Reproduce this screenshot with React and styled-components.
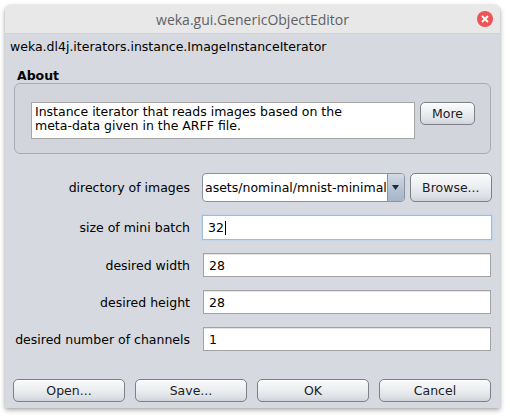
import { createGlobalStyle } from 'styled-components'
import styled from 'styled-components'

const GlobalStyle = createGlobalStyle`
  html, body {
    margin: 0;
    padding: 0;
    background: #ffffff;
  }
  body {
    font-family: 'DejaVu Sans', sans-serif;
    font-size: 12.5px;
    color: #000;
  }
`

const Page = styled.div`
  padding: 5px 10px 10px 5px;
`

const Window = styled.div`
  width: 495px;
  height: 403px;
  display: flex;
  flex-direction: column;
  border-radius: 6px 6px 0 0;
  box-shadow: 0 2px 5px rgba(0, 0, 0, 0.35), 0 0 1px rgba(0, 0, 0, 0.3);
  overflow: hidden;
`

const TitleBar = styled.div`
  height: 28px;
  flex: none;
  background: #e8e8e8;
  border-bottom: 1px solid #d0d0d0;
  display: flex;
  align-items: center;
  justify-content: center;
  position: relative;
  font-family: 'Open Sans', 'DejaVu Sans', sans-serif;
  font-size: 14px;
  color: #5e6165;
`

const CloseBtn = styled.div`
  position: absolute;
  right: 7px;
  top: 6px;
  width: 16px;
  height: 16px;
  border-radius: 50%;
  background: #ef5354;
  display: flex;
  align-items: center;
  justify-content: center;
`

const Body = styled.div`
  flex: 1;
  background: #d6d9df;
  display: flex;
  flex-direction: column;
`

const ClassName = styled.div`
  padding: 4px 5px 0;
  height: 17px;
  line-height: 17px;
`

const AboutLabel = styled.div`
  margin: 14px 0 0 12px;
  font-weight: bold;
  line-height: 14px;
`

const AboutBox = styled.div`
  margin: 0 9px 0 9px;
  height: 71px;
  box-sizing: border-box;
  border: 1px solid #a9adb3;
  border-radius: 6px;
  background: #d2d5db;
  padding: 18px 15px 0 16px;
  display: flex;
  gap: 5px;
  align-items: flex-start;
`

const AboutText = styled.div`
  width: 384px;
  height: 37px;
  box-sizing: border-box;
  background: #fff;
  border: 1px solid #a6a6a6;
  padding: 2px 3px;
  line-height: 14px;
`

const Button = styled.button`
  height: ${({ h }) => h || 23}px;
  width: ${({ w }) => (w ? `${w}px` : 'auto')};
  box-sizing: border-box;
  font-family: 'DejaVu Sans', sans-serif;
  font-size: 12.5px;
  color: #1c1c24;
  border: 1px solid #7c8088;
  border-radius: 5px;
  background: linear-gradient(#fbfbfc 0%, #eceef1 45%, #dee1e6 80%, #cfd2d8 100%);
  box-shadow: inset 0 1px 0 #ffffff;
  padding: 0;
`

const Form = styled.div`
  margin-top: 19px;
  padding: 0 10px 0 10px;
  display: grid;
  grid-template-columns: 175px 1fr;
  column-gap: 12px;
  row-gap: 13px;
  align-items: center;
`

const Label = styled.div`
  text-align: right;
  white-space: nowrap;
`

const Field = styled.div`
  height: ${({ h }) => h || 24}px;
  box-sizing: border-box;
  background: #fff;
  border: 1px solid ${({ focus }) => (focus ? '#9fbcd8' : '#a3a3a3')};
  box-shadow: ${({ focus }) => (focus ? '0 0 0 1px #c3d6ea' : 'inset 0 1px 0 #e4e4e4')};
  padding: 0 5px;
  display: flex;
  align-items: center;
  margin-left: ${({ focus }) => (focus ? '0' : '1px')};
  margin-right: ${({ focus }) => (focus ? '0' : '1px')};
`

const Caret = styled.span`
  display: inline-block;
  width: 1px;
  height: 14px;
  background: #000;
  margin-left: 1px;
`

const ComboRow = styled.div`
  display: flex;
  gap: 5px;
  align-items: stretch;
  height: 29px;
`

const Combo = styled.div`
  flex: 1;
  display: flex;
  box-sizing: border-box;
  border: 1px solid #8a939e;
  border-radius: 4px;
  overflow: hidden;
  background: #fff;
`

const ComboText = styled.div`
  flex: 1;
  overflow: hidden;
  white-space: nowrap;
  display: flex;
  align-items: center;
  padding-left: 2px;
`

const ComboArrow = styled.div`
  width: 16px;
  border-left: 1px solid #8a939e;
  background: linear-gradient(#d2dbe6, #b4c1d1 60%, #a7b5c7);
  display: flex;
  align-items: center;
  justify-content: center;
`

const Footer = styled.div`
  margin-top: auto;
  padding: 0 9px 6px 8px;
  display: grid;
  grid-template-columns: repeat(4, 1fr);
  column-gap: 10px;
`

const rows = [
  { label: 'size of mini batch', value: '32', focus: true, h: 25 },
  { label: 'desired width', value: '28' },
  { label: 'desired height', value: '28' },
  { label: 'desired number of channels', value: '1' },
]

export default function App() {
  return (
    <Page>
      <GlobalStyle />
      <Window>
        <TitleBar>
          weka.gui.GenericObjectEditor
          <CloseBtn>
            <svg width="8" height="8" viewBox="0 0 8 8">
              <path d="M1 1L7 7M7 1L1 7" stroke="#fff" strokeWidth="2" />
            </svg>
          </CloseBtn>
        </TitleBar>
        <Body>
          <ClassName>weka.dl4j.iterators.instance.ImageInstanceIterator</ClassName>
          <AboutLabel>About</AboutLabel>
          <AboutBox>
            <AboutText>
              Instance iterator that reads images based on the
              <br />
              meta-data given in the ARFF file.
            </AboutText>
            <Button w={55} h={23}>More</Button>
          </AboutBox>
          <Form>
            <Label>directory of images</Label>
            <ComboRow>
              <Combo>
                <ComboText>asets/nominal/mnist-minimal</ComboText>
                <ComboArrow>
                  <svg width="7" height="5" viewBox="0 0 7 5">
                    <path d="M0 0H7L3.5 5Z" fill="#1f2a38" />
                  </svg>
                </ComboArrow>
              </Combo>
              <Button w={82} h={29}>Browse...</Button>
            </ComboRow>
            {rows.map((r) => (
              <>
                <Label key={r.label + 'l'}>{r.label}</Label>
                <Field key={r.label + 'f'} focus={r.focus} h={r.h}>
                  {r.value}
                  {r.focus && <Caret />}
                </Field>
              </>
            ))}
          </Form>
          <Footer>
            <Button>Open...</Button>
            <Button>Save...</Button>
            <Button>OK</Button>
            <Button>Cancel</Button>
          </Footer>
        </Body>
      </Window>
    </Page>
  )
}
